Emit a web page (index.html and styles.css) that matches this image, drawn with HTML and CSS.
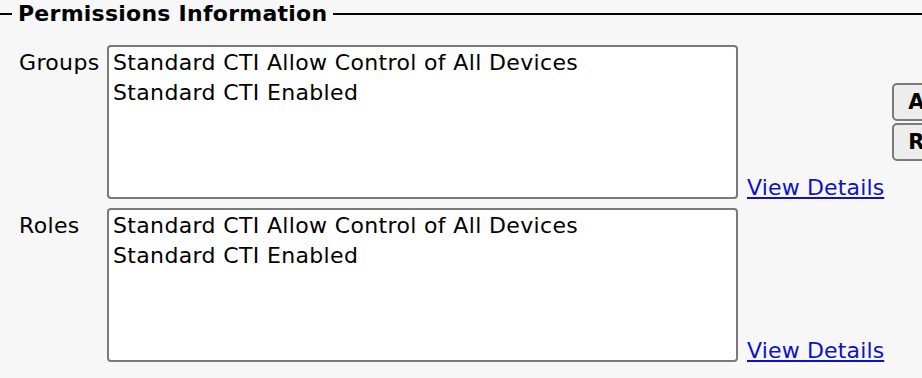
FILE: index.html
```html
<!DOCTYPE html>
<html lang="en">
<head>
    <meta charset="UTF-8">
    <title>Permissions Information</title>
    <link rel="stylesheet" href="styles.css">
</head>
<body>
    <fieldset class="perm-set">
        <legend>Permissions Information</legend>

        <div class="perm-row">
            <div class="perm-label">Groups</div>
            <div class="perm-list">
                <div>Standard CTI Allow Control of All Devices</div>
                <div>Standard CTI Enabled</div>
            </div>
            <a href="#" class="view-link">View Details</a>
            <div class="perm-actions">
                <button class="perm-btn">Add to Access Control Group</button>
                <button class="perm-btn">Remove from Access Control Group</button>
            </div>
        </div>

        <div class="perm-row">
            <div class="perm-label">Roles</div>
            <div class="perm-list">
                <div>Standard CTI Allow Control of All Devices</div>
                <div>Standard CTI Enabled</div>
            </div>
            <a href="#" class="view-link">View Details</a>
        </div>
    </fieldset>
</body>
</html>
```

FILE: styles.css
```css
html, body {
    overflow: hidden;
}
body {
    margin: 0;
    background-color: #f7f7f7;
    color: #000;
    font-family: "DejaVu Sans", Verdana, sans-serif;
    font-size: 22px;
    letter-spacing: 0.35px;
}
.perm-set {
    margin: 0;
    padding: 0 0 0 12px;
    border: none;
    border-top: 2px solid #000;
    min-width: 0;
}
.perm-set legend {
    padding: 0 6px;
    font-weight: bold;
    font-size: 22px;
    letter-spacing: 0.25px;
    line-height: 28px;
}
.perm-row {
    display: grid;
    grid-template-columns: 88px 631px max-content max-content;
    margin: 17px 0 0 7px;
    white-space: nowrap;
}
.perm-row + .perm-row {
    margin-top: 9px;
}
.perm-label {
    padding-top: 3px;
    line-height: 30px;
}
.perm-list {
    box-sizing: border-box;
    height: 154px;
    padding: 1px 4px 0;
    background-color: #fff;
    border: 2px solid #7a7a7a;
    border-radius: 4px;
    line-height: 30px;
}
.view-link {
    align-self: end;
    margin-left: 9px;
    margin-bottom: -4px;
    color: #0d12c9;
    letter-spacing: 0.15px;
    line-height: 30px;
}
.perm-actions {
    align-self: center;
    display: flex;
    flex-direction: column;
    gap: 2px;
    margin-left: 8px;
}
.perm-btn {
    height: 38px;
    padding: 0 14px;
    background-color: #ededed;
    border: 2px solid #7a7a7a;
    border-radius: 5px;
    font-family: "DejaVu Sans", Verdana, sans-serif;
    font-weight: bold;
    font-size: 21px;
    text-align: left;
    color: #000;
}
```
